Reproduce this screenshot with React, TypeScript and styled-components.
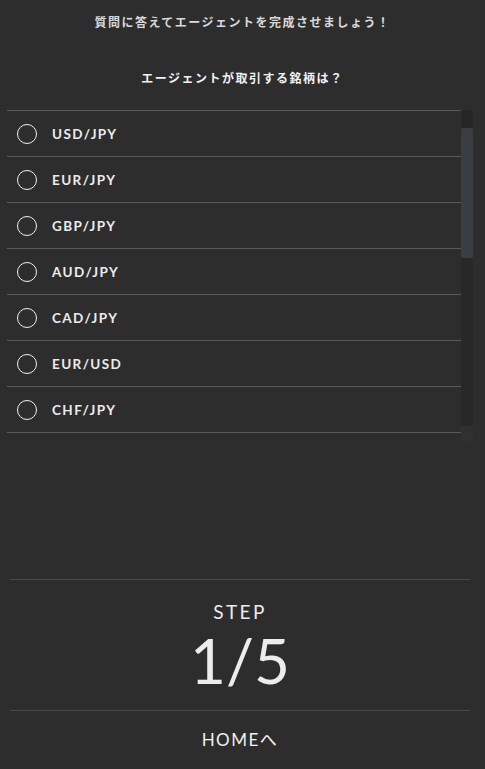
import styled, { createGlobalStyle } from "styled-components";

const GlobalStyle = createGlobalStyle`
  html, body {
    margin: 0;
    padding: 0;
    background: #2d2d2d;
  }
  body {
    font-family: "Lato", "Noto Sans CJK JP", sans-serif;
    color: #ececec;
  }
`;

const Page = styled.div`
  display: flex;
  flex-direction: column;
  width: 485px;
  height: 769px;
  box-sizing: border-box;
  background: #2d2d2d;
`;

const Lead = styled.p`
  margin: 0;
  padding-top: 13px;
  text-align: center;
  font-family: "Noto Sans CJK JP", sans-serif;
  font-weight: 700;
  font-size: 12px;
  letter-spacing: 1.5px;
  color: #d9d9d9;
`;

const Question = styled.h2`
  margin: 0;
  padding-top: 39px;
  padding-bottom: 24px;
  text-align: center;
  font-family: "Noto Sans CJK JP", sans-serif;
  font-weight: 700;
  font-size: 12px;
  letter-spacing: 1.5px;
  color: #f2f2f2;
`;

const ListBox = styled.div`
  position: relative;
  margin: 0 12px 0 7px;
  height: 332px;
`;

const List = styled.ul`
  margin: 0;
  padding: 0;
  list-style: none;
  border-top: 1px solid #5a5a5a;
`;

const Option = styled.li`
  display: flex;
  align-items: center;
  gap: 15px;
  height: 45px;
  padding-left: 10px;
  border-bottom: 1px solid #5a5a5a;
  cursor: pointer;
`;

const Radio = styled.span`
  width: 18px;
  height: 18px;
  border: 1.5px solid #f0f0f0;
  border-radius: 50%;
  flex-shrink: 0;
`;

const Label = styled.span`
  font-size: 13.5px;
  font-weight: 700;
  letter-spacing: 1.4px;
  color: #ececec;
`;

const ScrollTrack = styled.div`
  position: absolute;
  top: 0;
  right: 0;
  bottom: 0;
  width: 12px;
  display: flex;
  flex-direction: column;
  background: #282828;
`;

const ScrollButton = styled.div<{ $h: number; $bg: string }>`
  height: ${(p) => p.$h}px;
  background: ${(p) => p.$bg};
  flex-shrink: 0;
`;

const ScrollThumb = styled.div`
  height: 130px;
  background: #3a3e42;
  border-radius: 2px;
  flex-shrink: 0;
`;

const Spacer = styled.div`
  flex: 1;
`;

const Footer = styled.footer`
  margin: 0 15px 0 10px;
  border-top: 1px solid #4a4a4a;
`;

const Step = styled.div`
  display: flex;
  flex-direction: column;
  align-items: center;
  padding: 21px 0 19px;
  border-bottom: 1px solid #4a4a4a;
`;

const StepLabel = styled.span`
  font-size: 19px;
  letter-spacing: 2.4px;
  line-height: 22px;
`;

const StepCount = styled.span`
  font-size: 62px;
  font-weight: 400;
  line-height: 62px;
  margin-top: 6px;
`;

const HomeLink = styled.a`
  display: block;
  padding: 18px 0 18px;
  line-height: 22px;
  text-align: center;
  font-size: 17px;
  letter-spacing: 1.5px;
  color: #f0f0f0;
  text-decoration: none;
`;

const pairs = ["USD/JPY", "EUR/JPY", "GBP/JPY", "AUD/JPY", "CAD/JPY", "EUR/USD", "CHF/JPY"];

const App = () => {
  return (
    <>
      <GlobalStyle />
      <Page>
        <Lead>質問に答えてエージェントを完成させましょう！</Lead>
        <Question>エージェントが取引する銘柄は？</Question>
        <ListBox>
          <List>
            {pairs.map((p) => (
              <Option key={p}>
                <Radio />
                <Label>{p}</Label>
              </Option>
            ))}
          </List>
          <ScrollTrack>
            <ScrollButton $h={18} $bg="#262626" />
            <ScrollThumb />
            <Spacer />
            <ScrollButton $h={16} $bg="#303030" />
          </ScrollTrack>
        </ListBox>
        <Spacer />
        <Footer>
          <Step>
            <StepLabel>STEP</StepLabel>
            <StepCount>1/5</StepCount>
          </Step>
          <HomeLink href="#">HOMEへ</HomeLink>
        </Footer>
      </Page>
    </>
  );
};

export default App;
